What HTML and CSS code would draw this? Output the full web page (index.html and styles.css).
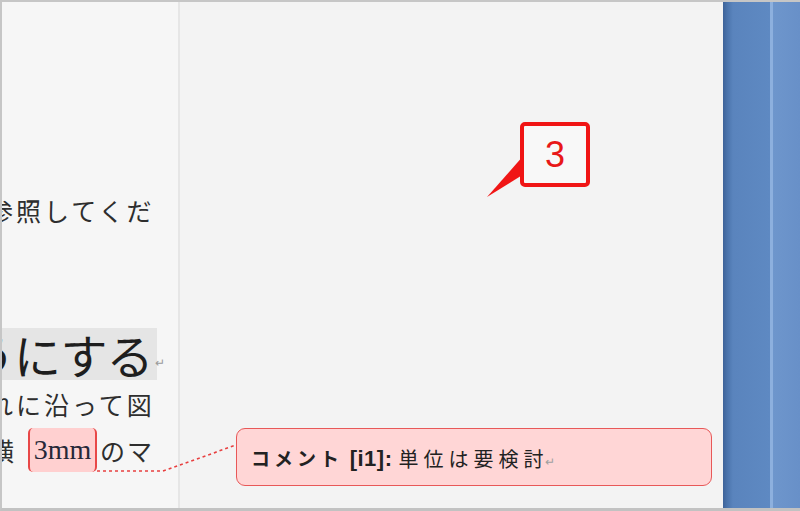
FILE: index.html
```html
<!DOCTYPE html>
<html lang="ja">
<head>
<meta charset="utf-8">
<title>コメント</title>
<link rel="stylesheet" href="styles.css">
</head>
<body>
<div class="frame">
  <div class="page">
    <div class="line l1"><span class="jp">参照してくだ</span></div>
    <div class="heading"><span class="htext">うにする</span><span class="ret">↵</span></div>
    <div class="line l3"><span class="jp">れに沿って図</span></div>
    <div class="line l4"><span class="jp">横</span><span class="mark">3mm</span><span class="jp after">のマ</span></div>
  </div>
  <div class="divider"></div>
  <div class="margin">
    <div class="comment"><b class="label"><span class="kana">コメント</span> [i1]:</b><span class="ctext">単位は要検討</span><span class="cret">↵</span></div>
  </div>
  <div class="bar"><div class="bar-main"></div><div class="bar-stripe"></div><div class="bar-end"></div></div>
</div>
<svg class="overlay" width="800" height="511" viewBox="0 0 800 511">
  <polyline points="97,471 163,471 236,445" fill="none" stroke="#e84040" stroke-width="1.6" stroke-dasharray="3 3"/>
  <polygon points="487,197 524,155 524,174" fill="#f01515"/>
</svg>
<div class="callout"><span>3</span></div>
</body>
</html>
```

FILE: styles.css
```css
html, body {
  margin: 0;
  padding: 0;
}
body {
  position: relative;
  width: 800px;
  height: 511px;
  overflow: hidden;
  background: #f4f4f4;
  font-family: "Noto Sans CJK JP", sans-serif;
}
.frame {
  box-sizing: border-box;
  width: 800px;
  height: 511px;
  border-top: 2px solid #c6c6c6;
  border-left: 2px solid #c6c6c6;
  border-bottom: 3px solid #c2c2c2;
  display: flex;
}
.page {
  width: 176px;
  flex: none;
  background: #f6f6f6;
  overflow: hidden;
  padding-top: 193px;
  box-sizing: border-box;
  color: #2e2e2e;
}
.line {
  display: flex;
  align-items: center;
  white-space: nowrap;
}
.jp {
  font-size: 25px;
  letter-spacing: 3px;
}
.l1 {
  height: 30px;
  margin-left: -14px;
}
.heading {
  margin-top: 103px;
  height: 52px;
  width: 155px;
  background: #e5e5e5;
  white-space: nowrap;
  display: flex;
  align-items: center;
  color: #1e1e1e;
}
.htext {
  font-size: 47px;
  letter-spacing: -1px;
  margin-left: -34px;
  line-height: 52px;
}
.ret {
  font-size: 12px;
  color: #9a9a9a;
  margin-left: 3px;
  margin-top: 14px;
}
.l3 {
  margin-top: 10px;
  height: 28px;
  margin-left: -14px;
}
.l4 {
  margin-top: 10px;
  height: 44px;
  margin-left: -13px;
}
.l4 .jp {
  letter-spacing: 2px;
}
.mark {
  box-sizing: border-box;
  margin-left: 12px;
  width: 69px;
  height: 44px;
  line-height: 44px;
  text-align: center;
  background: #ffd0d0;
  border-left: 2px solid #e84848;
  border-right: 2px solid #e84848;
  border-radius: 5px;
  font-family: "Liberation Serif", serif;
  font-size: 28px;
  color: #262838;
}
.l4 .after {
  margin-left: 3px;
}
.divider {
  width: 2px;
  flex: none;
  background: #e6e6e6;
}
.margin {
  flex: 1;
  background: #f3f3f3;
  display: flex;
  flex-direction: column;
  justify-content: flex-end;
  padding: 0 11px 22px 56px;
}
.comment {
  box-sizing: border-box;
  height: 58px;
  background: #ffd6d6;
  border: 1.5px solid #e85858;
  border-radius: 9px;
  display: flex;
  align-items: center;
  padding-left: 14px;
  padding-top: 2px;
  white-space: nowrap;
  color: #222;
  font-family: "Liberation Sans", "Noto Sans CJK JP", sans-serif;
}
.label {
  font-size: 22px;
  font-weight: 700;
  letter-spacing: 0.5px;
}
.kana {
  letter-spacing: 4px;
  font-family: "Noto Sans CJK JP", sans-serif;
  font-size: 19px;
}
.ctext {
  font-size: 20px;
  letter-spacing: 5px;
  margin-left: 6px;
  font-family: "Noto Sans CJK JP", sans-serif;
}
.cret {
  font-size: 12px;
  color: #a0a0a0;
  margin-top: 8px;
  margin-left: -3px;
}
.bar {
  width: 77px;
  flex: none;
  display: flex;
}
.bar-main {
  width: 47px;
  background: linear-gradient(to right, #3e6399 0, #4a73ab 4px, #5a84bd 10px, #5e89c2 100%);
}
.bar-stripe {
  width: 3px;
  background: #8db0de;
}
.bar-end {
  flex: 1;
  background: linear-gradient(to right, #6e96cc, #6890c8);
}
.overlay {
  position: absolute;
  left: 0;
  top: 0;
}
.callout {
  position: absolute;
  left: 520px;
  top: 122px;
  width: 70px;
  height: 65px;
  box-sizing: border-box;
  border: 4.5px solid #f01515;
  border-radius: 5px;
  background: #f8f8f8;
  display: flex;
  align-items: center;
  justify-content: center;
  font-family: "Liberation Sans", Arial, sans-serif;
  font-size: 36px;
  color: #e81818;
}
```
